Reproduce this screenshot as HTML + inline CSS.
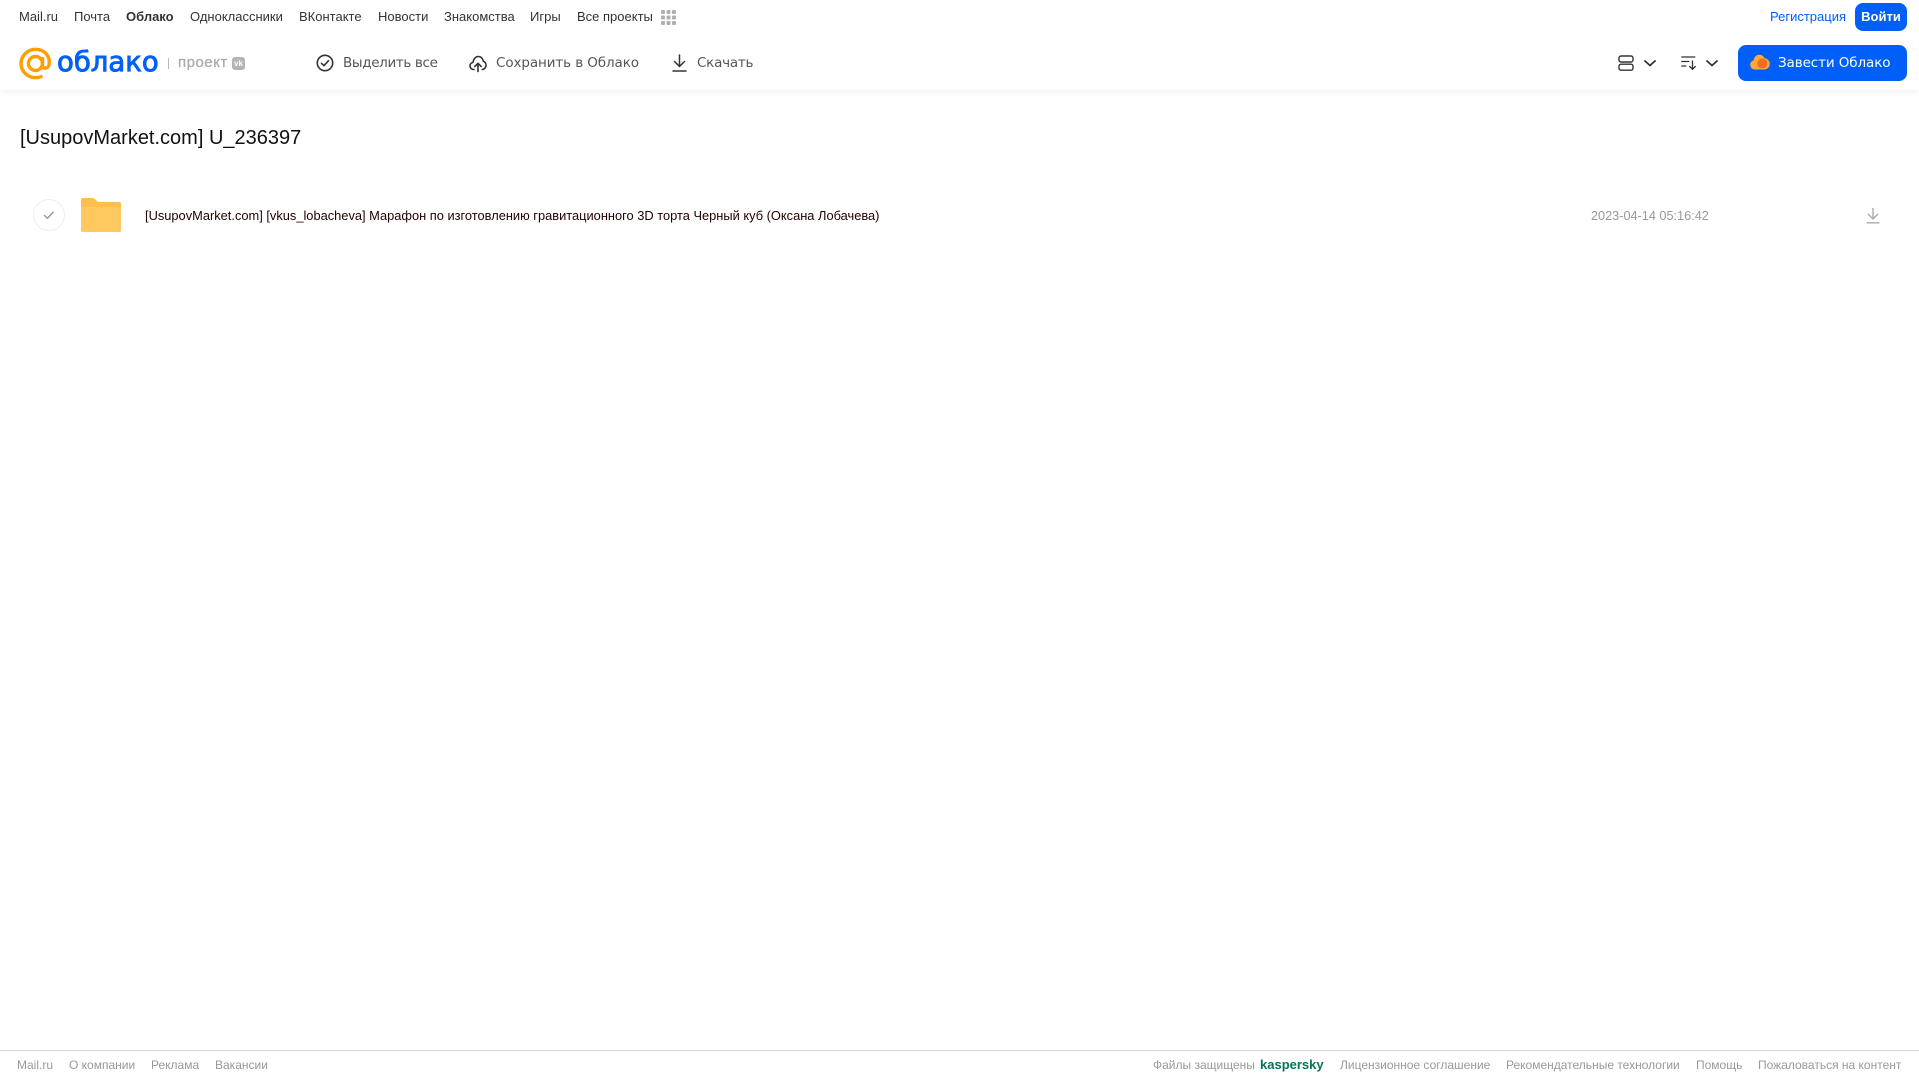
<!DOCTYPE html>
<html lang="ru"><head><meta charset="utf-8"><title>Облако</title>
<style>
html,body{margin:0;padding:0;background:#fff}
body{width:1919px;height:1079px;position:relative;overflow:hidden;font-family:"Liberation Sans",sans-serif}
.t{position:absolute;white-space:nowrap;line-height:16px}
.n{top:9px;font-size:13px;color:#333}
.b{top:55px;color:#555;font-family:"DejaVu Sans",sans-serif;font-size:13.5px;letter-spacing:-.1px}
.f{top:1057px;font-size:12px;color:#999}
svg{position:absolute;overflow:visible}
</style></head><body>
<div style="position:absolute;left:0;top:0;width:1919px;height:90px;background:#fff;box-shadow:0 2px 6px rgba(0,0,0,.06)"></div>

<span class="t n" style="left:19px">Mail.ru</span>
<span class="t n" style="left:74px">Почта</span>
<span class="t n" style="left:126px;font-weight:bold">Облако</span>
<span class="t n" style="left:190px">Одноклассники</span>
<span class="t n" style="left:299px">ВКонтакте</span>
<span class="t n" style="left:378px">Новости</span>
<span class="t n" style="left:444px">Знакомства</span>
<span class="t n" style="left:530px">Игры</span>
<span class="t n" style="left:577px">Все проекты</span>
<svg style="left:661px;top:10px" width="15" height="15" fill="#b0b0b0"><rect x="0" y="0" width="4" height="4" rx="1"/><rect x="5.5" y="0" width="4" height="4" rx="1"/><rect x="11" y="0" width="4" height="4" rx="1"/><rect x="0" y="5.5" width="4" height="4" rx="1"/><rect x="5.5" y="5.5" width="4" height="4" rx="1"/><rect x="11" y="5.5" width="4" height="4" rx="1"/><rect x="0" y="11" width="4" height="4" rx="1"/><rect x="5.5" y="11" width="4" height="4" rx="1"/><rect x="11" y="11" width="4" height="4" rx="1"/></svg>

<span class="t n" style="left:1770px;color:#005ff9">Регистрация</span>
<div style="position:absolute;left:1855px;top:3px;width:52px;height:28px;background:#005ff9;border-radius:8px;color:#fff;font-size:13px;font-weight:bold;text-align:center;line-height:28px">Войти</div>

<svg style="left:19px;top:47px" width="33" height="33" viewBox="0 0 33 33" fill="none" stroke="#ff9e00" stroke-width="3.4"><circle cx="16.5" cy="16.5" r="7"/><path d="M23.5 10v8.5c0 3.6 5.5 3.6 6.5-.5 1.6-7-3-15.700-13.500-15.700C8.700 2.300 2 8.700 2 16.500S8.700 30.700 16.500 30.700c2.700 0 4.800-.6 6.800-1.800"/></svg>
<span class="t" style="left:57px;top:46px;line-height:32px;font-size:27.5px;color:#005ff9;font-family:'DejaVu Sans',sans-serif;-webkit-text-stroke:.9px #005ff9">облако</span>
<div style="position:absolute;left:168px;top:58px;width:1px;height:11px;background:#bbb"></div>
<span class="t" style="left:178px;top:55px;font-size:15px;color:#aaa;letter-spacing:.5px;-webkit-text-stroke:.3px #aaa">проект</span>
<div style="position:absolute;left:232px;top:57px;width:13px;height:13px;border-radius:3px;background:#b4b4b4;color:#fff;font-size:8px;font-weight:bold;line-height:13px;text-align:center">vk</div>

<svg style="left:316px;top:54px" width="18" height="18" fill="none" stroke="#333" stroke-width="1.600"><circle cx="9" cy="9" r="7.700"/><path d="M5.500 9.300l2.500 2.400 4.500-5" stroke-linecap="round" stroke-linejoin="round"/></svg>
<span class="t b" style="left:343px;letter-spacing:-.35px">Выделить все</span>

<svg style="left:469px;top:55px" width="18" height="17" fill="none" stroke="#333" stroke-width="1.600" stroke-linecap="round" stroke-linejoin="round"><path d="M5 14.500H4.500C2.300 14.500 1 12.700 1 10.900c0-1.800 1.300-3.300 3-3.500C4.400 4 6.500 1.500 9.300 1.500c2.700 0 4.700 2.200 5 4.800 1.700.3 2.900 2.300 2.700 4.200-.2 2.200-1.700 4-3.800 4"/><path d="M9 16.500V8.500M5.800 11.500L9 8.300l3.200 3.200"/></svg>
<span class="t b" style="left:496px">Сохранить в Облако</span>

<svg style="left:672px;top:54px" width="15" height="18" fill="none" stroke="#333" stroke-width="1.500" stroke-linecap="round" stroke-linejoin="round"><path d="M7.500 1v11M2.500 7.500l5 5 5-5M1 17h13"/></svg>
<span class="t b" style="left:697px;letter-spacing:-.25px">Скачать</span>

<svg style="left:1618px;top:55px" width="16" height="16" fill="none" stroke="#333" stroke-width="1.400"><rect x="1" y="1" width="14" height="6" rx="2"/><rect x="1" y="9.200" width="14" height="6" rx="2"/></svg>
<svg style="left:1644px;top:60px" width="12" height="7" fill="none" stroke="#333" stroke-width="1.800" stroke-linecap="round" stroke-linejoin="round"><path d="M1 1l5 4.500L11 1"/></svg>
<svg style="left:1681px;top:56px" width="16" height="14" fill="none" stroke="#333" stroke-width="1.300" stroke-linecap="round" stroke-linejoin="round"><path d="M.8 1h13M.8 5.500h7M.8 10h4M11.500 5v8M8.700 10.500l2.800 2.800 2.800-2.800"/></svg>
<svg style="left:1706px;top:60px" width="12" height="7" fill="none" stroke="#333" stroke-width="1.800" stroke-linecap="round" stroke-linejoin="round"><path d="M1 1l5 4.500L11 1"/></svg>

<div style="position:absolute;left:1738px;top:45px;width:169px;height:36px;background:#005ff9;border-radius:8px"></div>
<svg style="left:1750px;top:54px" width="20" height="16"><path d="M5 15.500C2 15.500 .2 13.300.2 10.800c0-2.300 1.400-4 3.400-4.400C4.200 3 6.400.8 9.300.8c2.400 0 4.400 1.400 5.300 3.500 3 .3 5.200 2.700 5.200 5.600 0 3.200-2.500 5.600-5.600 5.600z" fill="#ffa930"/><circle cx="12.300" cy="9.500" r="5" fill="#f26d24"/></svg>
<span class="t b" style="left:1778px;color:#fff">Завести Облако</span>

<span class="t" style="left:20px;top:125px;line-height:26px;font-size:20px;color:#111">[UsupovMarket.com] U_236397</span>

<svg style="left:33px;top:199px" width="32" height="32" fill="none"><circle cx="16" cy="16" r="15.500" stroke="#eee"/><path d="M11.500 16.500l3 2.800 5.500-6" stroke="#999" stroke-width="1.500" stroke-linecap="round" stroke-linejoin="round"/></svg>
<svg style="left:81px;top:198px" width="40" height="34"><path d="M2 0h9c2 0 3 1 4 2C16 3.500 17 4 18.500 4H38c1.200 0 2 .8 2 2V32c0 1.200-.8 2-2 2H2c-1.200 0-2-.8-2-2V2C0 .8.800 0 2 0z" fill="#ffbe4d"/><path d="M0 9h40v23c0 1.200-.8 2-2 2H2c-1.200 0-2-.8-2-2z" fill="#ffc95f"/></svg>
<span class="t" style="left:145px;top:207.5px;font-size:12.85px;color:#200">[UsupovMarket.com] [vkus_lobacheva] Марафон по изготовлению гравитационного 3D торта Черный куб (Оксана Лобачева)</span>
<span class="t" style="left:1591px;top:207.5px;font-size:12.7px;color:#999">2023-04-14 05:16:42</span>
<svg style="left:1866px;top:207px" width="14" height="17" fill="none" stroke="#aaa" stroke-width="1.400" stroke-linejoin="round"><path d="M7 1v10.500M2 7l5 5 5-5M.5 15.800h13"/></svg>

<div style="position:absolute;left:0;top:1050px;width:1919px;height:1px;background:#d9d9d9"></div>
<span class="t f" style="left:17px">Mail.ru</span>
<span class="t f" style="left:69px">О компании</span>
<span class="t f" style="left:151px">Реклама</span>
<span class="t f" style="left:215px">Вакансии</span>
<span class="t f" style="left:1153px">Файлы защищены</span>
<span class="t f" style="left:1260px;color:#00765c;font-weight:bold;font-size:13px">kaspersky</span>
<span class="t f" style="left:1340px">Лицензионное соглашение</span>
<span class="t f" style="left:1506px">Рекомендательные технологии</span>
<span class="t f" style="left:1696px">Помощь</span>
<span class="t f" style="left:1758px">Пожаловаться на контент</span>
</body></html>
